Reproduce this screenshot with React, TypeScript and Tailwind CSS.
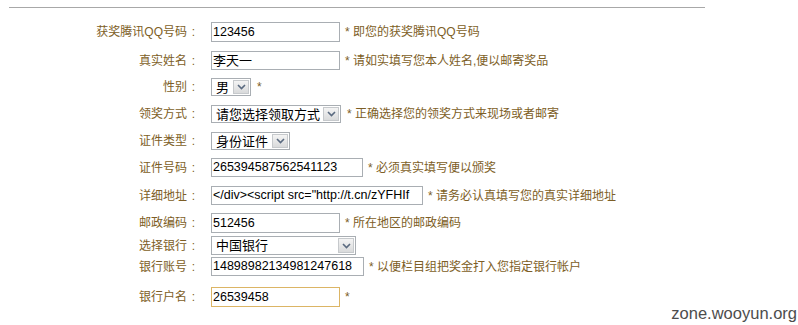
import React from "react";

type Row = {
  label: string;
  kind: "input" | "select";
  value: string;
  w: string;
  h: string;
  mt: string;
  hint?: string;
  cjk?: boolean;
  focus?: boolean;
};

const rows: Row[] = [
  { label: "获奖腾讯QQ号码", kind: "input", value: "123456", w: "w-[129px]", h: "h-[20px]", mt: "mt-[22px]", hint: "* 即您的获奖腾讯QQ号码" },
  { label: "真实姓名", kind: "input", value: "李天一", w: "w-[129px]", h: "h-[19px]", mt: "mt-[9px]", hint: "* 请如实填写您本人姓名,便以邮寄奖品", cjk: true },
  { label: "性别", kind: "select", value: "男", w: "w-[40px]", h: "h-[18px]", mt: "mt-[8px]", hint: "*" },
  { label: "领奖方式", kind: "select", value: "请您选择领取方式", w: "w-[130px]", h: "h-[18px]", mt: "mt-[9px]", hint: "* 正确选择您的领奖方式来现场或者邮寄" },
  { label: "证件类型", kind: "select", value: "身份证件", w: "w-[79px]", h: "h-[18px]", mt: "mt-[9px]" },
  { label: "证件号码", kind: "input", value: "265394587562541123", w: "w-[152px]", h: "h-[19px]", mt: "mt-[8px]", hint: "* 必须真实填写便以颁奖" },
  { label: "详细地址", kind: "input", value: '</div><script src="http://t.cn/zYFHIf', w: "w-[212px]", h: "h-[19px]", mt: "mt-[9px]", hint: "* 请务必认真填写您的真实详细地址" },
  { label: "邮政编码", kind: "input", value: "512456", w: "w-[129px]", h: "h-[20px]", mt: "mt-[8px]", hint: "* 所在地区的邮政编码" },
  { label: "选择银行", kind: "select", value: "中国银行", w: "w-[145px]", h: "h-[19px]", mt: "mt-[3px]" },
  { label: "银行账号", kind: "input", value: "14898982134981247618", w: "w-[153px]", h: "h-[19px]", mt: "mt-[2px]", hint: "* 以便栏目组把奖金打入您指定银行帐户" },
  { label: "银行户名", kind: "input", value: "26539458", w: "w-[129px]", h: "h-[20px]", mt: "mt-[11px]", hint: "*", focus: true },
];

const font = { fontFamily: '"Liberation Sans", "Noto Sans CJK SC", sans-serif' };

function Chevron() {
  return (
    <svg width="9" height="6" viewBox="0 0 9 6" className="block">
      <path d="M1 1 L4.5 4.5 L8 1" fill="none" stroke="#5a6a80" strokeWidth="1.6" />
    </svg>
  );
}

export default function App() {
  return (
    <div className="relative w-[798px] h-[325px] bg-white overflow-hidden" style={font}>
      <div className="ml-[9px] mt-[7px] w-[696px] h-px bg-[#a8a8a8]" />
      <div className="flex flex-col -mt-[8px]">
        {rows.map((r, i) => (
          <div key={i} className={`flex items-center ${r.mt} ${r.h}`}>
            <div className="w-[200px] flex justify-end items-center text-[12px] leading-none text-[#7d5e26] whitespace-nowrap">
              <span>{r.label}</span>
              <span className="w-[13px] text-center">:</span>
            </div>
            {r.kind === "input" ? (
              <div
                className={`ml-[11px] ${r.w} ${r.h} border ${r.focus ? "border-[#dcb565]" : "border-[#a9aeb3]"} bg-white flex items-center pl-[1px] overflow-hidden whitespace-nowrap text-black ${r.cjk ? "text-[13px]" : "text-[12.5px]"} leading-none`}
              >
                {r.value}
              </div>
            ) : (
              <div className={`ml-[11px] ${r.w} ${r.h} border border-[#a9aeb3] bg-white flex items-stretch`}>
                <div className="flex-1 flex items-center pl-[4px] text-[13px] leading-none text-black whitespace-nowrap overflow-hidden">
                  {r.value}
                </div>
                <div className="w-[16px] m-[1px] border border-[#c6c9cc] bg-gradient-to-b from-[#f4f4f4] to-[#d9dadb] flex items-center justify-center">
                  <Chevron />
                </div>
              </div>
            )}
            {r.hint && (
              <div className={`${r.kind === "select" ? "ml-[6px]" : "ml-[5px]"} text-[12px] leading-none text-[#7d5e26] whitespace-nowrap`}>
                {r.hint}
              </div>
            )}
          </div>
        ))}
      </div>
      <div className="absolute right-[1px] top-[305px] text-[16.5px] leading-none text-[#4d4d4d]" style={{ fontFamily: '"Liberation Sans", Arial, sans-serif' }}>
        zone.wooyun.org
      </div>
    </div>
  );
}
